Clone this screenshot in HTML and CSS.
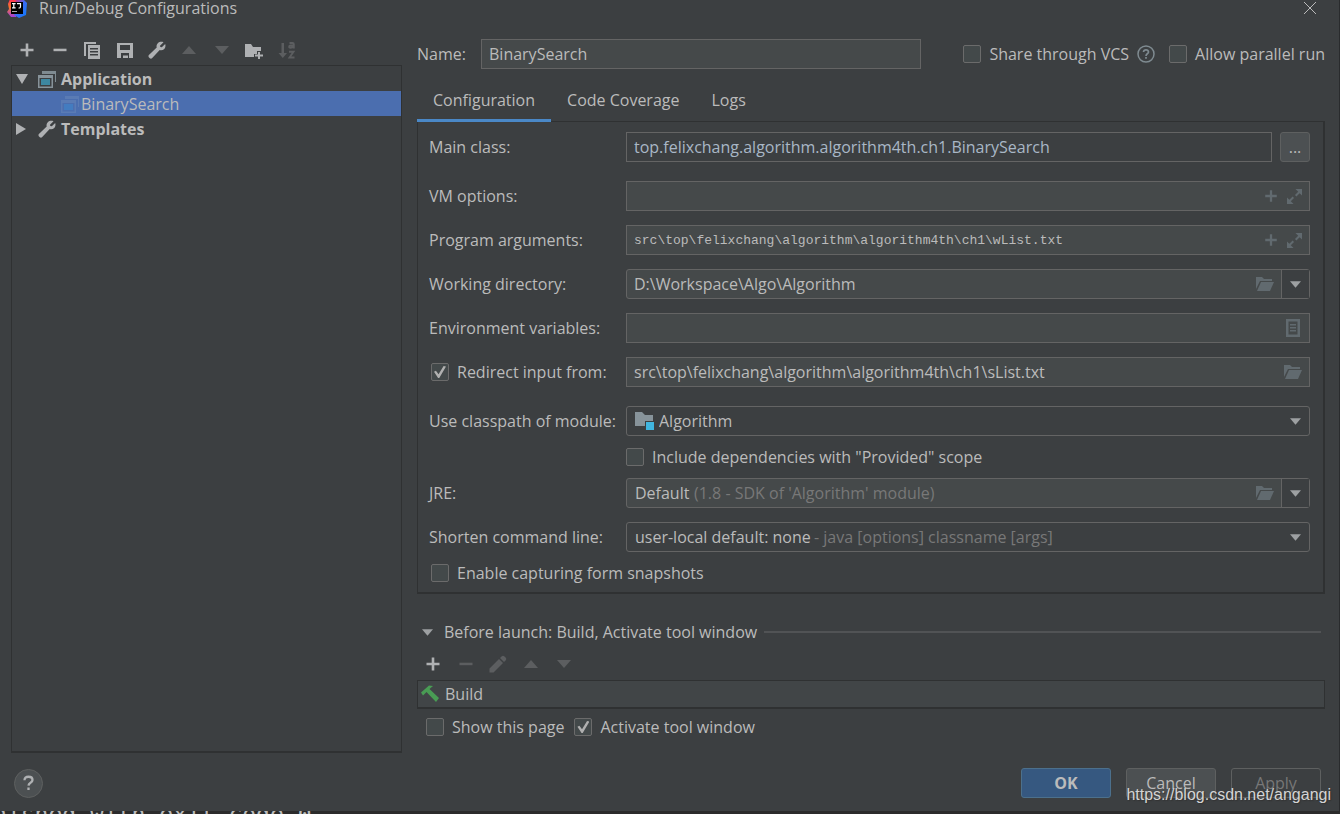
FILE: index.html
```html
<!DOCTYPE html>
<html lang="en">
<head>
<meta charset="utf-8">
<title>Run/Debug Configurations</title>
<link rel="stylesheet" href="styles.css">
</head>
<body>
<svg class="sprite" aria-hidden="true">
  <defs>
    <linearGradient id="lg-left" x1="0" y1="0" x2="0" y2="1"><stop offset="0" stop-color="#fe2857"/><stop offset=".45" stop-color="#f97a2a"/><stop offset="1" stop-color="#a13be0"/></linearGradient>
    <linearGradient id="lg-right" x1="0" y1="0" x2="1" y2="1"><stop offset="0" stop-color="#fe2857"/><stop offset=".5" stop-color="#3b6cf4"/><stop offset="1" stop-color="#087cfa"/></linearGradient>
  </defs>
  <symbol id="plus" viewBox="0 0 18 18"><path fill="currentColor" d="M7.700 2.500h2.600v5.200h5.200v2.600h-5.200v5.200H7.700v-5.200H2.500V7.700h5.200z"/></symbol>
  <symbol id="minus" viewBox="0 0 18 18"><path fill="currentColor" d="M2.500 7.700h13v2.500h-13z"/></symbol>
  <symbol id="copy" viewBox="0 0 18 18"><path fill="currentColor" d="M1 1h12v2H3v12H1zM5 4h12v14H5zM7 7v1.500h8V7zM7 10v1.500h8V10zM7 13v1.500h8V13z" fill-rule="evenodd"/></symbol>
  <symbol id="save" viewBox="0 0 18 18"><path fill="currentColor" fill-rule="evenodd" d="M1 2h16v15H1zM4 4v5h10V4zM5 12v5h2v-2.500h5V17h1v-5z"/></symbol>
  <symbol id="wrench" viewBox="0 0 18 18"><path fill="currentColor" d="M15.500 1.200 12 4.700l.3 1.300 1.500.3L17.200 3c.7 2.200.1 4.200-1.200 5.300-1.200 1-2.800 1.300-4.300.8L4 17.200c-.6.6-1.500.6-2.200 0l-1-1c-.5-.6-.5-1.500.1-2.100L8.700 6.500C8.300 5 8.600 3.400 9.800 2.200c1.400-1.300 3.600-1.700 5.700-1z"/></symbol>
  <symbol id="up" viewBox="0 0 18 18"><path fill="currentColor" d="M2 13 9 5l7 8z"/></symbol>
  <symbol id="down" viewBox="0 0 18 18"><path fill="currentColor" d="M2 5h14l-7 8z"/></symbol>
  <symbol id="folder-add" viewBox="0 0 18 18"><path fill="currentColor" d="M0 3h6l2 3h8v4h-4v3H9v3H0zM13 11h2v2.500h3v2h-3V18h-2v-2.500h-3v-2h3z"/></symbol>
  <symbol id="sort" viewBox="0 0 18 18"><path fill="currentColor" d="M3.500 2H6v10h3l-4.200 5L.5 12h3z"/><path fill="none" stroke="currentColor" stroke-width="1.900" d="M11.500 2h3q1.300 0 1.300 1.200v4.300M15.500 4.500h-3q-1.300 0-1.300 1.200t1.300 1.100q2.200 0 3-1.500M11 10.800h4.500L11.500 16.500H16.500"/></symbol>
  <symbol id="app" viewBox="0 0 18 18"><path fill="#7f8b91" d="M4 1h14v11h-1V4H4z"/><path fill="#87939a" fill-rule="evenodd" d="M0 5h15v13H0zM1.500 8v8.500h12V8z"/><path fill="#3d87a0" d="M3 9h9v6H3z"/></symbol>
  <symbol id="app-faded" viewBox="0 0 18 18"><path fill="#5a7bb4" d="M4 1h14v11h-1V4H4z"/><path fill="#5a7bb4" fill-rule="evenodd" d="M0 5h15v13H0zM1.500 8v8.500h12V8z"/><path fill="#437cc0" d="M3 9h9v6H3z"/></symbol>
  <symbol id="expand" viewBox="0 0 16 16"><path fill="currentColor" d="M9 0h7v7l-2.500-2.500L10 8 8.500 6.500 12 3zM0 9l2.500 2.500L6 8l1.500 1.500L4 13l3 3H0z"/></symbol>
  <symbol id="folder" viewBox="0 0 18 16"><path fill="currentColor" d="M0 1h6l2 2h8v2H4L0 13z"/><path fill="currentColor" d="M5 6h13l-4 9H1z"/></symbol>
  <symbol id="doc" viewBox="0 0 14 18"><path fill="currentColor" fill-rule="evenodd" d="M0 0h14v18H0zM2.500 2.500v13h9v-13z"/><path fill="currentColor" d="M4 5h6v1.500H4zM4 8h6v1.500H4zM4 11h6v1.500H4z"/></symbol>
  <symbol id="module" viewBox="0 0 19 18"><path fill="#87939a" d="M0 0h7l3 3h8v6h-8v5H0z"/><path fill="#40b6e0" d="M11 10h8v8h-8z"/></symbol>
  <symbol id="pencil" viewBox="0 0 18 18"><path fill="currentColor" d="M10 4l4 4-9.500 9.500H.5v-4zM11 3l1.800-1.800q1.200-1 2.400 0l1.600 1.600q1.100 1.200 0 2.400L15 7z"/></symbol>
  <symbol id="hammer" viewBox="0 0 18 18"><path fill="#499c54" d="M0 7.500 8 .5l4 .5-3.500 3 9.500 9-3 4-9.500-10-3.500 3.500z"/></symbol>
</svg>

<div class="dialog">
  <header class="titlebar">
    <svg class="logo" viewBox="0 0 20 20"><path fill="url(#lg-left)" d="M3 1h8L9 19H4L0 14l2-3-1-5z"/><path fill="url(#lg-right)" d="M9 0h6l5 5-1 12-7 3-5-3z"/><path fill="#000" d="M4 4h12v12H4z"/><path fill="none" stroke="#fff" stroke-width="1.200" d="M5 5.600h3.600M6.800 5.600v4.300M5 9.900h3.600M10 5.600h3.500v3q0 1.500-2 1.400"/><path fill="#aaa" d="M5 13h5v1H5z"/></svg>
    <h1>Run/Debug Configurations</h1>
    <button class="close" aria-label="Close"><svg viewBox="0 0 12 12"><path stroke="#bbb" fill="none" d="M0 0 12 12M12 0 0 12"/></svg></button>
  </header>

  <main class="content">
    <section class="sidebar">
      <div class="tools tools-main">
        <button aria-label="Add"><svg><use href="#plus"/></svg></button>
        <button aria-label="Remove"><svg><use href="#minus"/></svg></button>
        <button aria-label="Copy"><svg><use href="#copy"/></svg></button>
        <button aria-label="Save"><svg><use href="#save"/></svg></button>
        <button aria-label="Edit templates"><svg><use href="#wrench"/></svg></button>
        <button aria-label="Move up" disabled><svg><use href="#up"/></svg></button>
        <button aria-label="Move down" disabled><svg><use href="#down"/></svg></button>
        <button aria-label="New folder"><svg><use href="#folder-add"/></svg></button>
        <button aria-label="Sort" disabled><svg><use href="#sort"/></svg></button>
      </div>
      <ul class="tree">
        <li class="group"><svg class="twisty" viewBox="0 0 12 12"><path d="M0 1h12L6 11z"/></svg><svg class="node"><use href="#app"/></svg>Application</li>
        <li class="leaf selected"><svg class="node"><use href="#app-faded"/></svg>BinarySearch</li>
        <li class="group"><svg class="twisty" viewBox="0 0 12 12"><path d="M0 0v12l10-6z"/></svg><svg class="node"><use href="#wrench"/></svg>Templates</li>
      </ul>
    </section>

    <section class="editor">
      <div class="name-row">
        <label for="name">Name:</label>
        <div class="field name-field"><input id="name" type="text" value="BinarySearch"></div>
        <div class="name-options">
          <label class="check"><input type="checkbox">Share through VCS</label>
          <svg class="hint" viewBox="0 0 18 18"><circle cx="9" cy="9" r="8" fill="none" stroke="#7f8b91" stroke-width="1.500"/><path fill="none" stroke="#7f8b91" stroke-width="1.700" d="M6.500 7q.2-2.200 2.500-2.200T11.500 7q0 1-1.200 1.800T9 11M9 12v1.800"/></svg>
          <label class="check"><input type="checkbox">Allow parallel run</label>
        </div>
      </div>

      <nav class="tabs">
        <button class="active">Configuration</button>
        <button>Code Coverage</button>
        <button>Logs</button>
      </nav>

      <form class="panel">
        <div class="row">
          <label for="main-class">Main class:</label>
          <div class="field plain"><input id="main-class" type="text" value="top.felixchang.algorithm.algorithm4th.ch1.BinarySearch"></div>
          <button type="button" class="browse" aria-label="Browse">...</button>
        </div>
        <div class="row spaced">
          <label for="vm">VM options:</label>
          <div class="field"><input id="vm" type="text"><svg class="icon"><use href="#plus"/></svg><svg class="icon small"><use href="#expand"/></svg></div>
        </div>
        <div class="row">
          <label for="args">Program arguments:</label>
          <div class="field"><input id="args" class="mono" type="text" value="src\top\felixchang\algorithm\algorithm4th\ch1\wList.txt"><svg class="icon"><use href="#plus"/></svg><svg class="icon small"><use href="#expand"/></svg></div>
        </div>
        <div class="row">
          <label for="wd">Working directory:</label>
          <div class="field combo"><input id="wd" type="text" value="D:\Workspace\Algo\Algorithm"><svg class="icon"><use href="#folder"/></svg><button type="button" class="drop" aria-label="Show history"><svg viewBox="0 0 10 6"><path d="M0 0h10L5 6z"/></svg></button></div>
        </div>
        <div class="row">
          <label for="env">Environment variables:</label>
          <div class="field"><input id="env" type="text"><svg class="icon page"><use href="#doc"/></svg></div>
        </div>
        <div class="row">
          <label class="check indent"><input type="checkbox" checked>Redirect input from:</label>
          <div class="field"><input aria-label="Redirect input file" type="text" value="src\top\felixchang\algorithm\algorithm4th\ch1\sList.txt"><svg class="icon"><use href="#folder"/></svg></div>
        </div>
        <div class="row spaced">
          <label for="module-select">Use classpath of module:</label>
          <div class="select with-icon"><select id="module-select"><option>Algorithm</option></select><svg class="module"><use href="#module"/></svg><svg class="arrow" viewBox="0 0 10 6"><path d="M0 0h10L5 6z"/></svg></div>
        </div>
        <div class="row-check offset"><label class="check"><input type="checkbox">Include dependencies with "Provided" scope</label></div>
        <div class="row tight">
          <label for="jre">JRE:</label>
          <div class="field combo jre"><div class="select bare"><select id="jre"><option>Default</option></select><span class="note note-jre">(1.8 - SDK of 'Algorithm' module)</span></div><svg class="icon"><use href="#folder"/></svg><button type="button" class="drop" aria-label="Choose JRE"><svg viewBox="0 0 10 6"><path d="M0 0h10L5 6z"/></svg></button></div>
        </div>
        <div class="row">
          <label for="shorten">Shorten command line:</label>
          <div class="select"><select id="shorten"><option>user-local default: none</option></select><span class="note note-shorten">- java [options] classname [args]</span><svg class="arrow" viewBox="0 0 10 6"><path d="M0 0h10L5 6z"/></svg></div>
        </div>
        <div class="row-check"><label class="check indent"><input type="checkbox">Enable capturing form snapshots</label></div>
      </form>

      <section class="before">
        <h2><svg viewBox="0 0 10 6"><path d="M0 0h10L5 6z"/></svg>Before launch: Build, Activate tool window</h2>
        <div class="tools tools-before">
          <button aria-label="Add task"><svg><use href="#plus"/></svg></button>
          <button aria-label="Remove task" disabled><svg><use href="#minus"/></svg></button>
          <button aria-label="Edit task" disabled><svg><use href="#pencil"/></svg></button>
          <button aria-label="Move task up" disabled><svg><use href="#up"/></svg></button>
          <button aria-label="Move task down" disabled><svg><use href="#down"/></svg></button>
        </div>
        <ul class="tasks"><li><svg><use href="#hammer"/></svg>Build</li></ul>
        <div class="launch-options">
          <label class="check"><input type="checkbox">Show this page</label>
          <label class="check"><input type="checkbox" checked>Activate tool window</label>
        </div>
      </section>
    </section>
  </main>

  <footer class="actions">
    <button class="help" aria-label="Help"><svg viewBox="0 0 12 18"><path fill="none" stroke="#afb1b3" stroke-width="2.600" d="M1.500 6Q1.500 2 6 2t4.500 3.600q0 1.800-2.200 3T6 12M6 14v2.800"/></svg></button>
    <button class="btn primary">OK</button>
    <button class="btn">Cancel</button>
    <button class="btn" disabled>Apply</button>
  </footer>
  <div class="watermark">https://blog.csdn.net/angangi</div>
</div>
<div class="console"><span>nished with exit code 0</span></div>
</body>
</html>
```
FILE: styles.css
```css
* { box-sizing: border-box; }

body {
  margin: 0;
  min-height: 100vh;
  display: flex;
  flex-direction: column;
  overflow: hidden;
  background: #2b2b2b;
  color: #bbbbbb;
  font: 16px/20px "Open Sans", "Noto Sans", sans-serif;
}

button, input, select { font: inherit; color: inherit; }
button { padding: 0; border: 0; background: none; }
h1, h2, ul { margin: 0; padding: 0; font: inherit; list-style: none; }
svg { display: block; flex: none; }
.sprite { position: absolute; width: 0; height: 0; }

.dialog {
  position: relative;
  flex: 1;
  display: flex;
  flex-direction: column;
  background: #3c3f41;
  border-right: 1px solid #292b2d;
}

.titlebar {
  display: flex;
  align-items: center;
  height: 16px;
  padding: 0 23px 0 7px;
}
.logo { width: 20px; height: 20px; margin-right: 12px; }
.titlebar h1 { flex: 1; }
.close svg { width: 12px; height: 12px; }

.content { flex: 1; display: flex; gap: 15px; padding: 0 14px 0 11px; }

.sidebar { flex: 0 0 391px; display: flex; flex-direction: column; padding-top: 18px; }
.tools { display: grid; height: 31px; color: #afb1b3; }
.tools button { display: grid; place-items: center; }
.tools button:disabled { color: #5c5e60; }
.tools svg { width: 18px; height: 18px; }
.tools-main { width: 292px; grid-template-columns: repeat(9, 1fr); }
.tools-before { width: 163px; grid-template-columns: repeat(5, 1fr); }

.tree { flex: 1; border: 1px solid #2f3132; border-bottom-width: 2px; }
.tree li { display: flex; align-items: center; height: 25px; }
.group { padding-left: 4px; font-weight: bold; }
.leaf { padding-left: 49px; }
.selected { background: #4b6eaf; }
.twisty { width: 12px; height: 12px; margin-right: 10px; fill: #afb1b3; }
.node { width: 18px; height: 18px; margin-right: 5px; color: #afb1b3; }
.leaf .node { margin-right: 2px; }

.editor { flex: 1; min-width: 0; padding-top: 22px; }
.name-row { display: flex; align-items: center; height: 31px; }
.name-row > label { width: 64px; }
.name-options { margin-left: auto; display: flex; align-items: center; }
.hint { width: 18px; height: 18px; margin: 0 14px 0 8px; }

.field {
  flex: 1;
  min-width: 0;
  height: 30px;
  display: flex;
  align-items: center;
  background: #45494a;
  border: 1px solid #646464;
}
.name-field { flex: 0 0 440px; }
.field input {
  flex: 1;
  min-width: 0;
  height: 100%;
  padding: 0 7px;
  border: 0;
  background: none;
  outline: 0;
}
.field input.mono { font: 13px "Liberation Mono", monospace; }
.plain { background: #3c3f41; color: #a9b7c6; }
.icon { width: 18px; height: 16px; margin-right: 7px; color: #616a6f; }
.icon.small { width: 15px; height: 15px; }
.icon.page { height: 18px; }

.combo, .select { border: 1px solid #646464; border-radius: 3px; }
.drop {
  width: 28px;
  height: 100%;
  display: grid;
  place-items: center;
  background: #3c3f41;
  border-left: 1px solid #646464;
}
.drop svg, .arrow, .before h2 svg { width: 11px; height: 7px; fill: #9da0a2; }

.select { flex: 1; height: 30px; display: grid; align-items: center; }
.select > * { grid-area: 1 / 1; }
.select select {
  width: 100%;
  height: 28px;
  padding: 0 8px;
  appearance: none;
  border: 0;
  background: none;
}
.with-icon select { padding-left: 32px; }
.select.bare { border: 0; height: 28px; }
.module { width: 19px; height: 18px; margin-left: 8px; pointer-events: none; }
.arrow { justify-self: end; margin-right: 8px; pointer-events: none; }
.note { color: #787878; pointer-events: none; white-space: nowrap; }
.note-jre { padding-left: 67px; }
.note-shorten { padding-left: 187px; }

.check { display: flex; align-items: center; gap: 8px; white-space: nowrap; }
.check input {
  appearance: none;
  flex: none;
  display: grid;
  place-items: center;
  width: 18px;
  height: 18px;
  margin: 0;
  background: #43494a;
  border: 1px solid #6b6b6b;
  border-radius: 2px;
}
.check input:checked::before {
  content: "";
  width: 12px;
  height: 12px;
  background: #b0b0b0;
  clip-path: polygon(0 48%, 16% 40%, 38% 68%, 80% 0, 100% 4%, 44% 100%, 34% 100%);
}

.tabs { display: flex; height: 53px; padding-top: 11px; }
.tabs button { padding: 0 16px; border-bottom: 3px solid transparent; }
.tabs .active { border-color: #4a88c7; }

.panel {
  margin-top: -1px;
  padding: 10px 13px 10px 11px;
  border: 1px solid #2f3132;
  border-right-width: 2px;
  border-bottom-width: 2px;
}
.row { display: flex; align-items: center; margin-top: 14px; }
.row:first-child { margin-top: 0; }
.row.spaced { margin-top: 19px; }
.row.tight { margin-top: 12px; }
.row > label { flex: 0 0 197px; }
.row-check { margin-top: 12px; height: 18px; display: flex; align-items: center; }
.offset { padding-left: 197px; }
.indent { padding-left: 2px; }
.browse {
  width: 30px;
  height: 30px;
  margin-left: 8px;
  background: #4c5052;
  border: 1px solid #5e6060;
  border-radius: 3px;
}

.before { padding-top: 28px; }
.before h2 { display: flex; align-items: center; }
.before h2 svg { margin: 0 11px 0 5px; }
.before h2::after { content: ""; flex: 1; height: 2px; margin: 0 4px 0 7px; background: #515355; }
.tools-before { height: 38px; padding-top: 6px; }
.tasks { border: 1px solid #2f3132; border-bottom-width: 2px; background: #414547; }
.tasks li { display: flex; align-items: center; gap: 6px; height: 26px; padding-left: 3px; }
.tasks svg { width: 18px; height: 18px; }
.launch-options { display: flex; gap: 10px; padding: 8px 9px 0; }

.actions { display: flex; align-items: center; gap: 15px; padding: 15px 18px 13px 14px; }
.help {
  width: 29px;
  height: 29px;
  margin-right: auto;
  display: grid;
  place-items: center;
  background: #4c5052;
  border: 1px solid #5e6060;
  border-radius: 50%;
}
.help svg { width: 11px; height: 16px; }
.btn {
  width: 90px;
  height: 30px;
  background: #4c5052;
  border: 1px solid #5e6060;
  border-radius: 3px;
}
.primary { background: #365880; border-color: #4c708c; font-weight: bold; }
.btn:disabled { background: none; color: #777777; }

.watermark {
  position: absolute;
  right: 8px;
  bottom: 6px;
  color: #d4d4d4;
  font: 16px/20px "Liberation Sans", sans-serif;
  text-shadow: 1px 1px 1px #333333;
}

.console {
  height: 3px;
  overflow: hidden;
  white-space: pre;
  font: 23px/6px "DejaVu Sans Mono", monospace;
}
.console span { margin-left: -7px; }
```
